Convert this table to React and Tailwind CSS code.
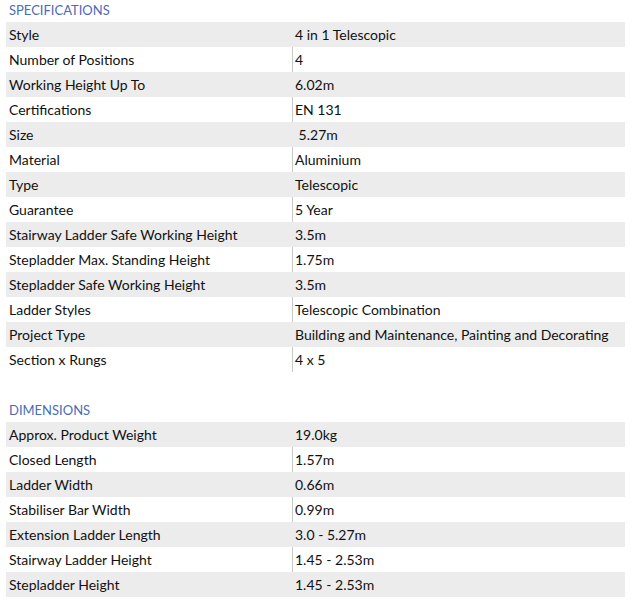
const specs = [
  ["Style", "4 in 1 Telescopic"],
  ["Number of Positions", "4"],
  ["Working Height Up To", "6.02m"],
  ["Certifications", "EN 131"],
  ["Size", "\u00a05.27m"],
  ["Material", "Aluminium"],
  ["Type", "Telescopic"],
  ["Guarantee", "5 Year"],
  ["Stairway Ladder Safe Working Height", "3.5m"],
  ["Stepladder Max. Standing Height", "1.75m"],
  ["Stepladder Safe Working Height", "3.5m"],
  ["Ladder Styles", "Telescopic Combination"],
  ["Project Type", "Building and Maintenance, Painting and Decorating"],
  ["Section x Rungs", "4 x 5"],
];
const dims = [
  ["Approx. Product Weight", "19.0kg"],
  ["Closed Length", "1.57m"],
  ["Ladder Width", "0.66m"],
  ["Stabiliser Bar Width", "0.99m"],
  ["Extension Ladder Length", "3.0 - 5.27m"],
  ["Stairway Ladder Height", "1.45 - 2.53m"],
  ["Stepladder Height", "1.45 - 2.53m"],
];

function Table({ rows }) {
  return (
    <div className="flex flex-col">
      {rows.map(([k, v], i) => (
        <div
          key={k}
          className={`flex h-[25px] items-center ${i % 2 === 0 ? "bg-[#ececec]" : "bg-white"}`}
        >
          <div className="w-[286px] pl-[3px] whitespace-pre">{k}</div>
          <div
            className={`flex-1 h-full flex items-center pl-[2px] whitespace-pre border-l ${
              i % 2 === 0 ? "border-transparent" : "border-[#c8c8c8]"
            }`}
          >
            {v}
          </div>
        </div>
      ))}
    </div>
  );
}

export default function App() {
  return (
    <div
      className="w-[632px] h-[603px] bg-white text-[#111111] text-[14px] pl-[6px] pr-[7px]"
      style={{ fontFamily: "Lato, 'Open Sans', sans-serif" }}
    >
      <div className="h-[22px] flex items-center pl-[3px] text-[13px] text-[#4a6cb8]">SPECIFICATIONS</div>
      <Table rows={specs} />
      <div className="h-[50px] flex items-end pb-[2px] pl-[3px] text-[13px] text-[#4a6cb8]">DIMENSIONS</div>
      <Table rows={dims} />
    </div>
  );
}
